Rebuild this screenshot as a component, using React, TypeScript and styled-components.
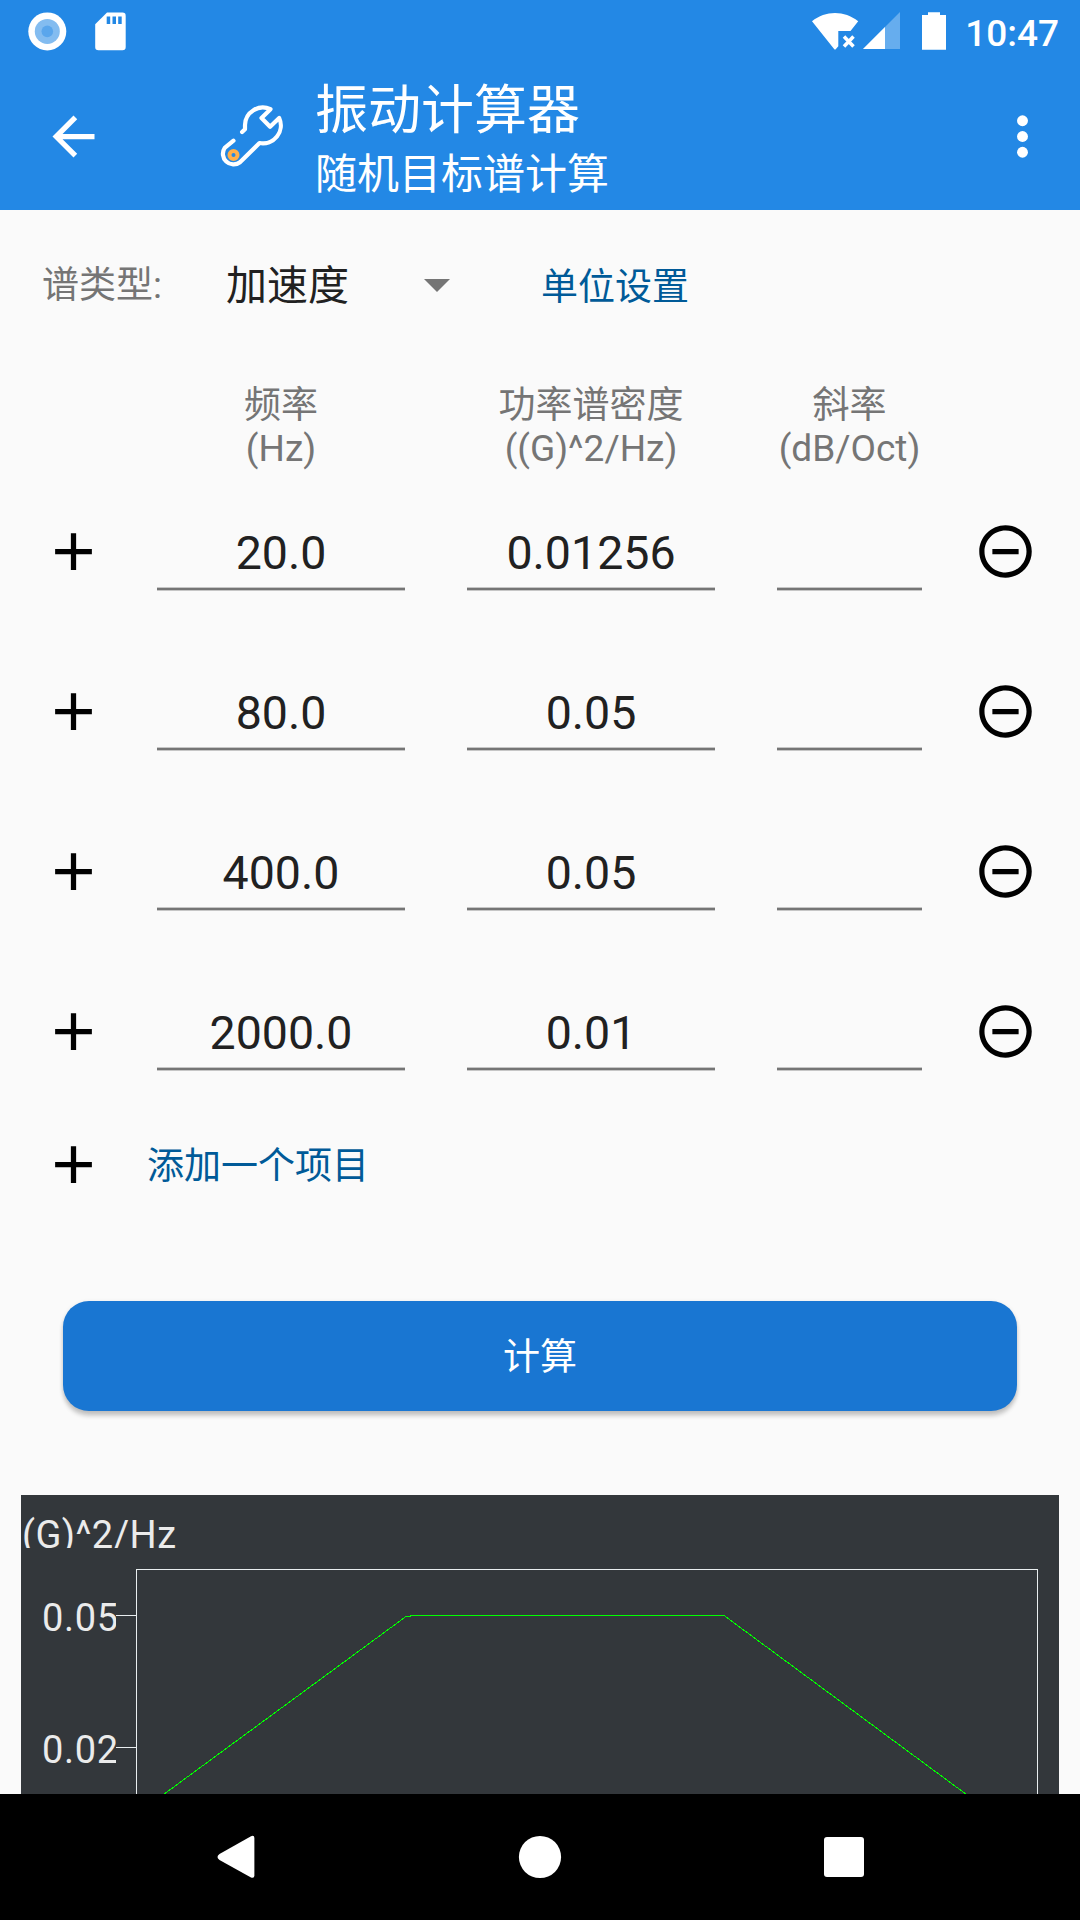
import React from "react";
import styled, { createGlobalStyle } from "styled-components";

const GlobalStyle = createGlobalStyle`
  * { box-sizing: border-box; }
  html, body { margin: 0; padding: 0; background: #fafafa; }
  body, input, button {
    font-family: Roboto, "Noto Sans CJK SC", sans-serif;
    font-weight: 400;
  }
`;

const Screen = styled.div`
  width: 1080px;
  height: 1920px;
  display: flex;
  flex-direction: column;
  overflow: hidden;
  background: #fafafa;
`;

const StatusBar = styled.div`
  height: 63px;
  flex: none;
  display: flex;
  align-items: center;
  justify-content: space-between;
  padding: 0 21px 0 28px;
  background: #2388e5;
`;

const StatusGroup = styled.div`
  display: flex;
  align-items: center;
`;

const Clock = styled.span`
  margin-left: 18px;
  padding-top: 3px;
  color: #fff;
  font-size: 37px;
  font-weight: 500;
  line-height: 63px;
`;

const AppBar = styled.header`
  height: 147px;
  flex: none;
  display: flex;
  align-items: center;
  padding: 0 26px 0 42px;
  background: #2388e5;
  color: #fff;
`;

const IconButton = styled.button`
  width: 63px;
  height: 63px;
  flex: none;
  padding: 0;
  border: 0;
  background: none;
  color: inherit;
  svg { display: block; }
`;

const Logo = styled.div`
  width: 68px;
  height: 68px;
  margin-left: 112px;
  svg { display: block; }
`;

const Titles = styled.div`
  flex: 1;
  margin-left: 30px;
  padding-top: 15px;
`;

const Title = styled.h1`
  margin: 0;
  font-size: 53px;
  font-weight: 400;
  line-height: 62px;
`;

const Subtitle = styled.div`
  font-size: 42px;
  line-height: 66px;
`;

const Content = styled.main`
  flex: 1;
  min-height: 0;
  overflow: hidden;
  display: flex;
  flex-direction: column;
`;

const TypeRow = styled.div`
  display: flex;
  align-items: center;
  height: 150px;
  padding-left: 42px;
`;

const Label = styled.span`
  width: 184px;
  padding-top: 2px;
  color: #757575;
  font-size: 37px;
  line-height: 44px;
`;

const Spinner = styled.div`
  width: 224px;
  display: flex;
  align-items: center;
  justify-content: space-between;
  color: #212121;
  font-size: 41px;
  line-height: 50px;
`;

const SpinnerValue = styled.span`
  padding-top: 2px;
`;

const LinkText = styled.button<{ $gap: number; $drop?: number }>`
  margin: 0 0 0 ${(p) => p.$gap}px;
  padding: ${(p) => p.$drop ?? 4}px 0 0;
  border: 0;
  background: none;
  color: #005a98;
  font-size: 37px;
  line-height: 44px;
`;

const HeadGrid = styled.div`
  display: grid;
  grid-template-columns: 248px 248px 145px;
  column-gap: 62px;
  margin-top: 24px;
  padding-left: 157px;
`;

const HeadCell = styled.div`
  display: flex;
  justify-content: center;
  color: #757575;
  font-size: 37px;
  line-height: 43px;
  text-align: center;
  white-space: nowrap;
`;

const Rows = styled.div`
  margin-top: 2px;
`;

const ItemRow = styled.div`
  height: 160px;
  display: flex;
  align-items: center;
  padding: 0 0 1px 42px;
`;

const Field = styled.input<{ $width: number; $gap: number }>`
  width: ${(p) => p.$width}px;
  height: 76px;
  margin: 1px 0 0 ${(p) => p.$gap}px;
  padding: 4px 0 0;
  border: 0;
  border-bottom: 2px solid #757575;
  border-radius: 0;
  outline: 0;
  background: none;
  box-shadow: 0 1px 0 #c6c6c6, inset 0 -1px 0 #c6c6c6;
  color: #212121;
  font-size: 46.5px;
  text-align: center;
`;

const RemoveButton = styled(IconButton)`
  margin-left: 52px;
`;

const AddRow = styled.div`
  display: flex;
  align-items: center;
  height: 106px;
  padding: 0 0 1px 42px;
`;

const Calculate = styled.button`
  height: 110px;
  flex: none;
  margin: 83px 63px 0;
  padding: 3px 0 0;
  border: 0;
  border-radius: 26px;
  background: #1976d2;
  color: #fff;
  font-size: 37px;
  line-height: 107px;
  box-shadow: 0 5px 4px rgba(0, 0, 0, 0.19), 0 1px 4px rgba(0, 0, 0, 0.1);
`;

const ChartPanel = styled.section`
  flex: 1;
  min-height: 0;
  margin: 84px 21px 0;
  overflow: hidden;
  background: #33373b;
  svg { display: block; }
  text { font-family: Roboto, sans-serif; font-size: 38px; fill: #ebebeb; }
`;

const NavBar = styled.nav`
  height: 126px;
  flex: none;
  display: flex;
  align-items: center;
  justify-content: space-between;
  padding: 0 205px;
  background: #000;
  svg { display: block; }
`;

const PlusIcon = () => (
  <svg width="63" height="63" viewBox="0 0 24 24" fill="#000">
    <path d="M19 13h-6v6h-2v-6H5v-2h6V5h2v6h6z" />
  </svg>
);

const MinusIcon = () => (
  <svg width="63" height="63" viewBox="0 0 24 24" fill="#000">
    <path d="M7 11v2h10v-2zm5-9C6.48 2 2 6.48 2 12s4.48 10 10 10 10-4.48 10-10S17.52 2 12 2m0 18c-4.41 0-8-3.59-8-8s3.59-8 8-8 8 3.59 8 8-3.59 8-8 8" />
  </svg>
);

const WrenchIcon = () => (
  <svg width="68" height="68" viewBox="217.500 102 68 68" fill="none">
    <path
      d="M242.600 131L245.500 128.200V124A17.900 17.900 0 0 1 271 108.200L262 117L270.600 125.700L279.700 117A17.900 17.900 0 0 1 260 142L240.500 161.300A10.700 10.700 0 0 1 225.200 146.800L234 139.700"
      stroke="#fff"
      strokeWidth="4.200"
      strokeLinecap="round"
      strokeLinejoin="round"
    />
    <circle cx="234" cy="154" r="4" stroke="#ffb04a" strokeWidth="4" />
  </svg>
);

const items = [
  { frequency: "20.0", density: "0.01256" },
  { frequency: "80.0", density: "0.05" },
  { frequency: "400.0", density: "0.05" },
  { frequency: "2000.0", density: "0.01" },
];

const Chart = () => (
  <svg width="1038" height="299" viewBox="0 0 1038 299">
    <defs>
      <clipPath id="unitClip">
        <rect x="0" y="0" width="300" height="53" />
      </clipPath>
      <clipPath id="tickClip">
        <rect x="0" y="60" width="95" height="239" />
      </clipPath>
    </defs>
    <g clipPath="url(#unitClip)">
      <text x="1" y="53" textLength="154">(G)^2/Hz</text>
    </g>
    <g clipPath="url(#tickClip)">
      <text x="21" y="135.700" textLength="76">0.05</text>
      <text x="21" y="267.700" textLength="76">0.02</text>
    </g>
    <g stroke="#e9eef0" fill="none" shapeRendering="crispEdges">
      <path d="M115.500 299V74.500H1016.500V299M95 120.500H115M95 252.500H115" />
    </g>
    <path
      d="M142.500 299.500L385 121.500H389V120.500H703L945.500 299.500"
      stroke="#0f0"
      fill="none"
      shapeRendering="crispEdges"
    />
  </svg>
);

export default function App() {
  return (
    <Screen>
      <GlobalStyle />
      <StatusBar>
        <StatusGroup>
          <svg width="100" height="63" viewBox="28 0 100 63">
            <circle cx="47.300" cy="31.400" r="19" fill="#fff" />
            <circle cx="47.300" cy="31.400" r="12.500" fill="#83bcf0" />
            <circle cx="47.300" cy="31.400" r="5.800" fill="#5aa6ec" />
            <path
              d="M107 12.500H122.500Q125.700 12.500 125.700 15.700V47Q125.700 50.300 122.500 50.300H98.500Q95.200 50.300 95.200 47V24.300Z"
              fill="#fff"
            />
            <path d="M106.700 16.500h3.500v7.500h-3.500zM112.500 16.500h3.500v7.500h-3.500zM118.200 16.500h3.500v7.500h-3.500z" fill="#2388e5" />
          </svg>
        </StatusGroup>
        <StatusGroup>
          <svg width="136" height="63" viewBox="811 0 136 63">
            <path
              d="M812 21.300C825.500 10.300 844.500 10.300 858.200 21.300L850.500 31H838.300V46.200L835.500 49.500H834.500Z"
              fill="#fff"
            />
            <path d="M844 36.500L853.500 46.500M853.500 36.500L844 46.500" stroke="#fff" strokeWidth="3.500" />
            <path d="M900 12V49H863Z" fill="#66adee" />
            <path d="M885 27V49H863Z" fill="#fff" />
            <path d="M922 15H928V12.200H940V15H946V49.800H922Z" fill="#fff" />
          </svg>
          <Clock>10:47</Clock>
        </StatusGroup>
      </StatusBar>
      <AppBar>
        <IconButton aria-label="back">
          <svg width="63" height="63" viewBox="0 0 24 24" fill="#fff">
            <path d="M20 11H7.830l5.590-5.590L12 4l-8 8 8 8 1.410-1.410L7.830 13H20z" />
          </svg>
        </IconButton>
        <Logo>
          <WrenchIcon />
        </Logo>
        <Titles>
          <Title>振动计算器</Title>
          <Subtitle>随机目标谱计算</Subtitle>
        </Titles>
        <IconButton aria-label="more">
          <svg width="63" height="63" viewBox="0 0 24 24" fill="#fff">
            <circle cx="12" cy="6" r="2.080" />
            <circle cx="12" cy="12" r="2.080" />
            <circle cx="12" cy="18" r="2.080" />
          </svg>
        </IconButton>
      </AppBar>
      <Content>
        <TypeRow>
          <Label>谱类型:</Label>
          <Spinner>
            <SpinnerValue>加速度</SpinnerValue>
            <svg width="26" height="13" viewBox="0 0 26 13">
              <path d="M0 0H26L13 13Z" fill="#757575" />
            </svg>
          </Spinner>
          <LinkText $gap={91} $drop={6}>单位设置</LinkText>
        </TypeRow>
        <HeadGrid>
          <HeadCell>频率<br />(Hz)</HeadCell>
          <HeadCell>功率谱密度<br />((G)^2/Hz)</HeadCell>
          <HeadCell>斜率<br />(dB/Oct)</HeadCell>
        </HeadGrid>
        <Rows>
          {items.map((item) => (
            <ItemRow key={item.frequency}>
              <IconButton aria-label="insert"><PlusIcon /></IconButton>
              <Field $width={248} $gap={52} defaultValue={item.frequency} />
              <Field $width={248} $gap={62} defaultValue={item.density} />
              <Field $width={145} $gap={62} defaultValue="" />
              <RemoveButton aria-label="remove"><MinusIcon /></RemoveButton>
            </ItemRow>
          ))}
        </Rows>
        <AddRow>
          <IconButton aria-label="add"><PlusIcon /></IconButton>
          <LinkText $gap={42}>添加一个项目</LinkText>
        </AddRow>
        <Calculate>计算</Calculate>
        <ChartPanel>
          <Chart />
        </ChartPanel>
      </Content>
      <NavBar>
        <svg width="63" height="64" viewBox="205 1825 63 64">
          <path
            d="M254.400 1838V1875.500Q254.400 1878.500 251 1877.500L219.500 1860Q215.500 1857 219.500 1854L251 1836.200Q254.400 1835 254.400 1838Z"
            fill="#fff"
          />
        </svg>
        <svg width="64" height="64" viewBox="0 0 64 64">
          <circle cx="32" cy="32" r="21.100" fill="#fff" />
        </svg>
        <svg width="63" height="64" viewBox="0 0 63 64">
          <rect x="12" y="12" width="40" height="40" rx="3" fill="#fff" />
        </svg>
      </NavBar>
    </Screen>
  );
}
